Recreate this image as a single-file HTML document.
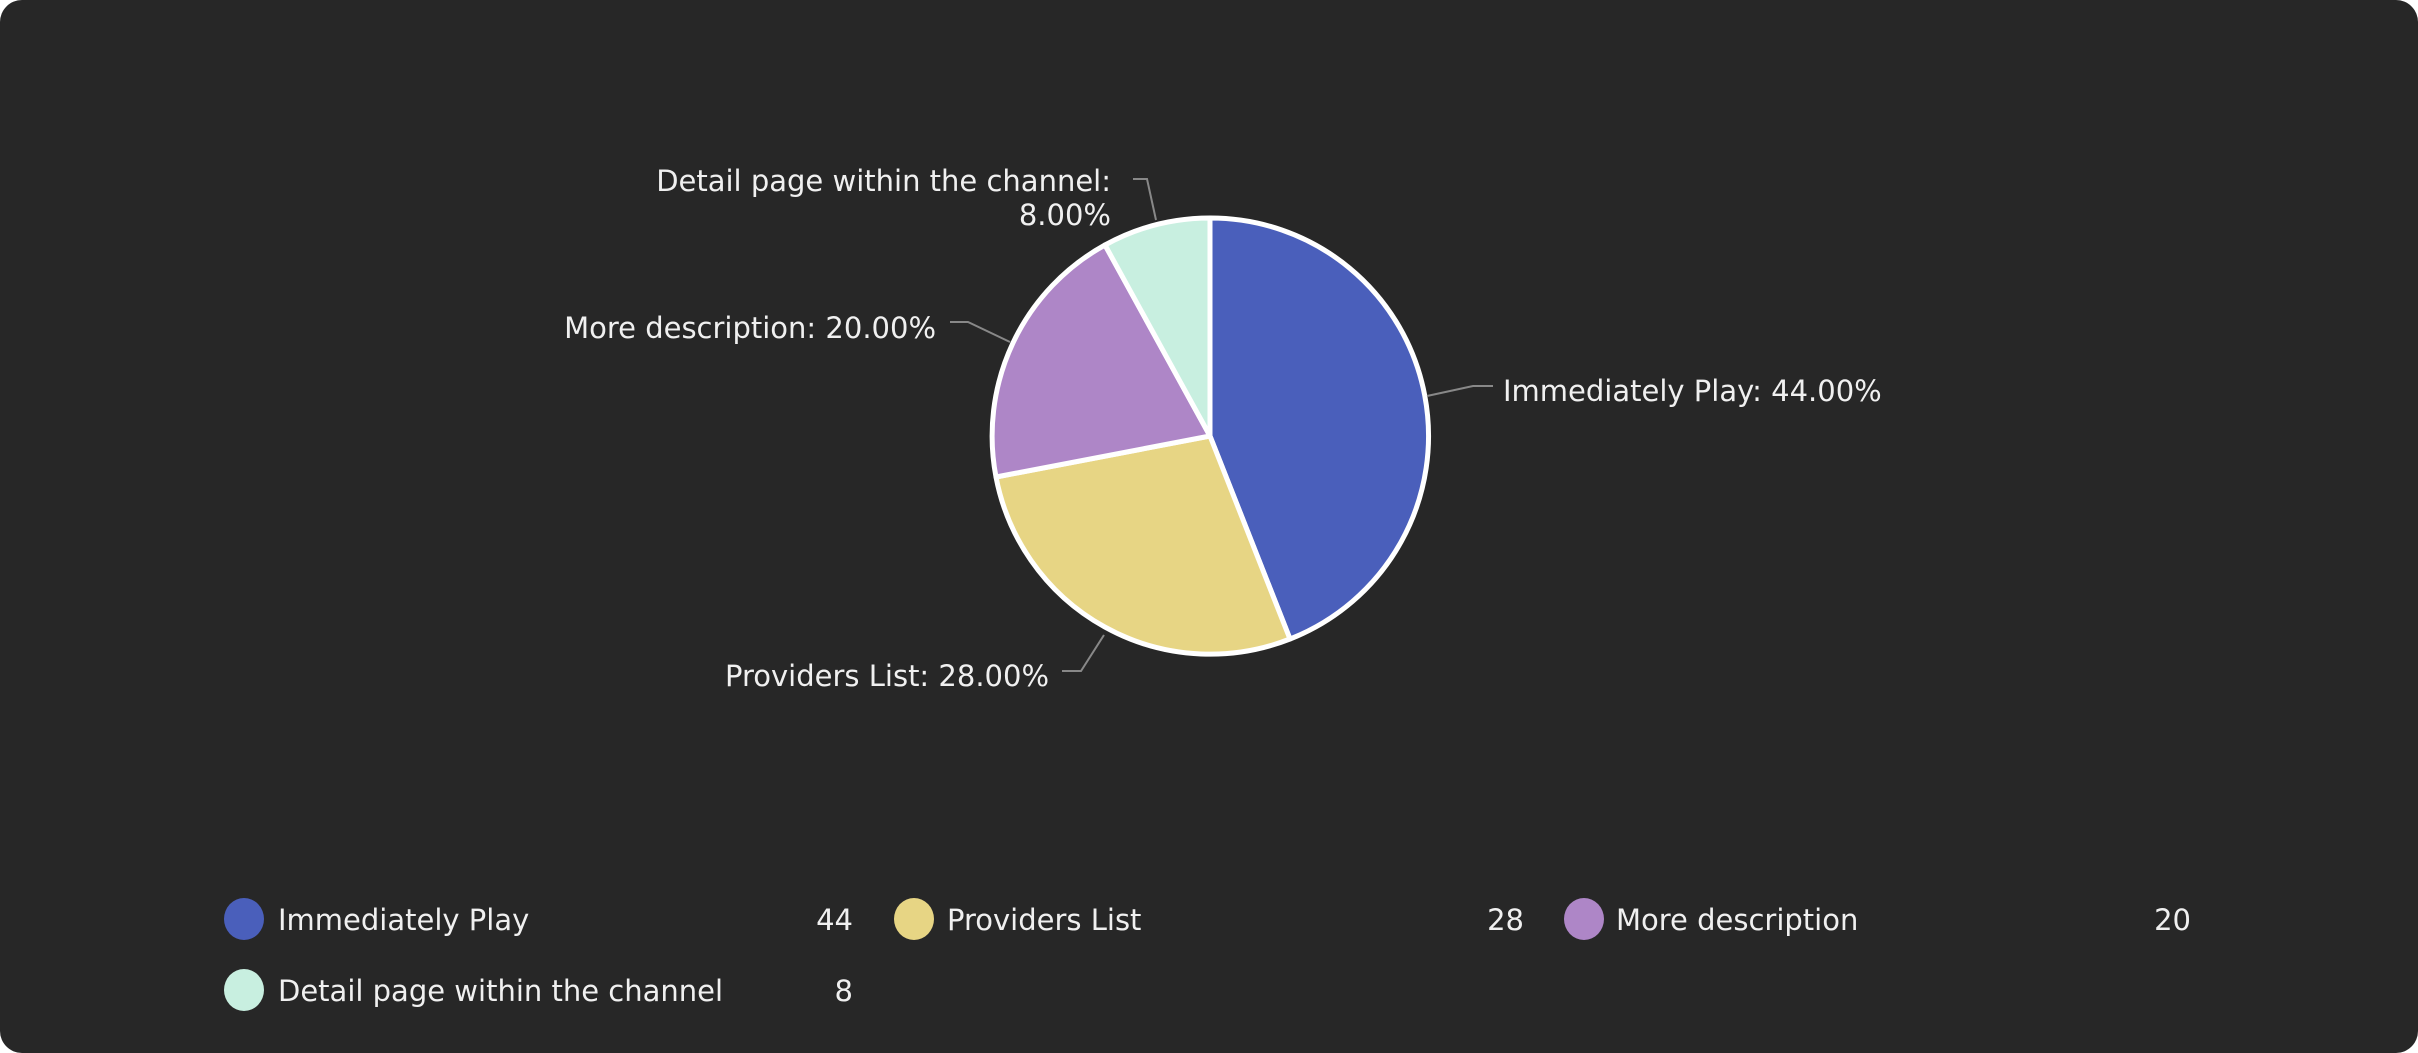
<!DOCTYPE html>
<html><head><style>
html,body{margin:0;padding:0;background:#fff;}
svg{display:block}
text{font-family:"DejaVu Sans","Liberation Sans",sans-serif;fill:#f0f0f0;font-size:29px;}
</style></head><body>
<svg width="2418" height="1053" viewBox="0 0 2418 1053" xmlns="http://www.w3.org/2000/svg">
<rect x="0" y="0" width="2418" height="1053" rx="22" ry="22" fill="#272727"/>
<g stroke="#fff" stroke-width="5" stroke-linejoin="round">
<path d="M1210 436 L1210 218 A218 218 0 0 1 1290 639 Z" fill="#4a5fbb"/>
<path d="M1210 436 L1290 639 A218 218 0 0 1 996 477 Z" fill="#e7d584"/>
<path d="M1210 436 L996 477 A218 218 0 0 1 1105 245 Z" fill="#ae86c7"/>
<path d="M1210 436 L1105 245 A218 218 0 0 1 1210 218 Z" fill="#c8efe0"/>
</g>
<g stroke="#888" stroke-width="2" fill="none">
<polyline points="1427,396 1473,386 1493,386"/>
<polyline points="1010,342 968,322 950,322"/>
<polyline points="1156,220 1147,179 1133,179"/>
<polyline points="1104,635 1081,671 1062,671"/>
</g>
<text x="1503" y="401">Immediately Play: 44.00%</text>
<text x="936" y="338" text-anchor="end">More description: 20.00%</text>
<text x="1111" y="191" text-anchor="end">Detail page within the channel:</text>
<text x="1111" y="225" text-anchor="end">8.00%</text>
<text x="1049" y="686" text-anchor="end">Providers List: 28.00%</text>
<ellipse cx="244" cy="919" rx="20" ry="21" fill="#4a5fbb"/>
<text x="278" y="930">Immediately Play</text>
<text x="853" y="930" text-anchor="end">44</text>
<ellipse cx="914" cy="919" rx="20" ry="21" fill="#e7d584"/>
<text x="947" y="930">Providers List</text>
<text x="1524" y="930" text-anchor="end">28</text>
<ellipse cx="1584" cy="919" rx="20" ry="21" fill="#ae86c7"/>
<text x="1616" y="930">More description</text>
<text x="2191" y="930" text-anchor="end">20</text>
<ellipse cx="244" cy="990" rx="20" ry="21" fill="#c8efe0"/>
<text x="278" y="1001">Detail page within the channel</text>
<text x="853" y="1001" text-anchor="end">8</text>
</svg>
</body></html>
